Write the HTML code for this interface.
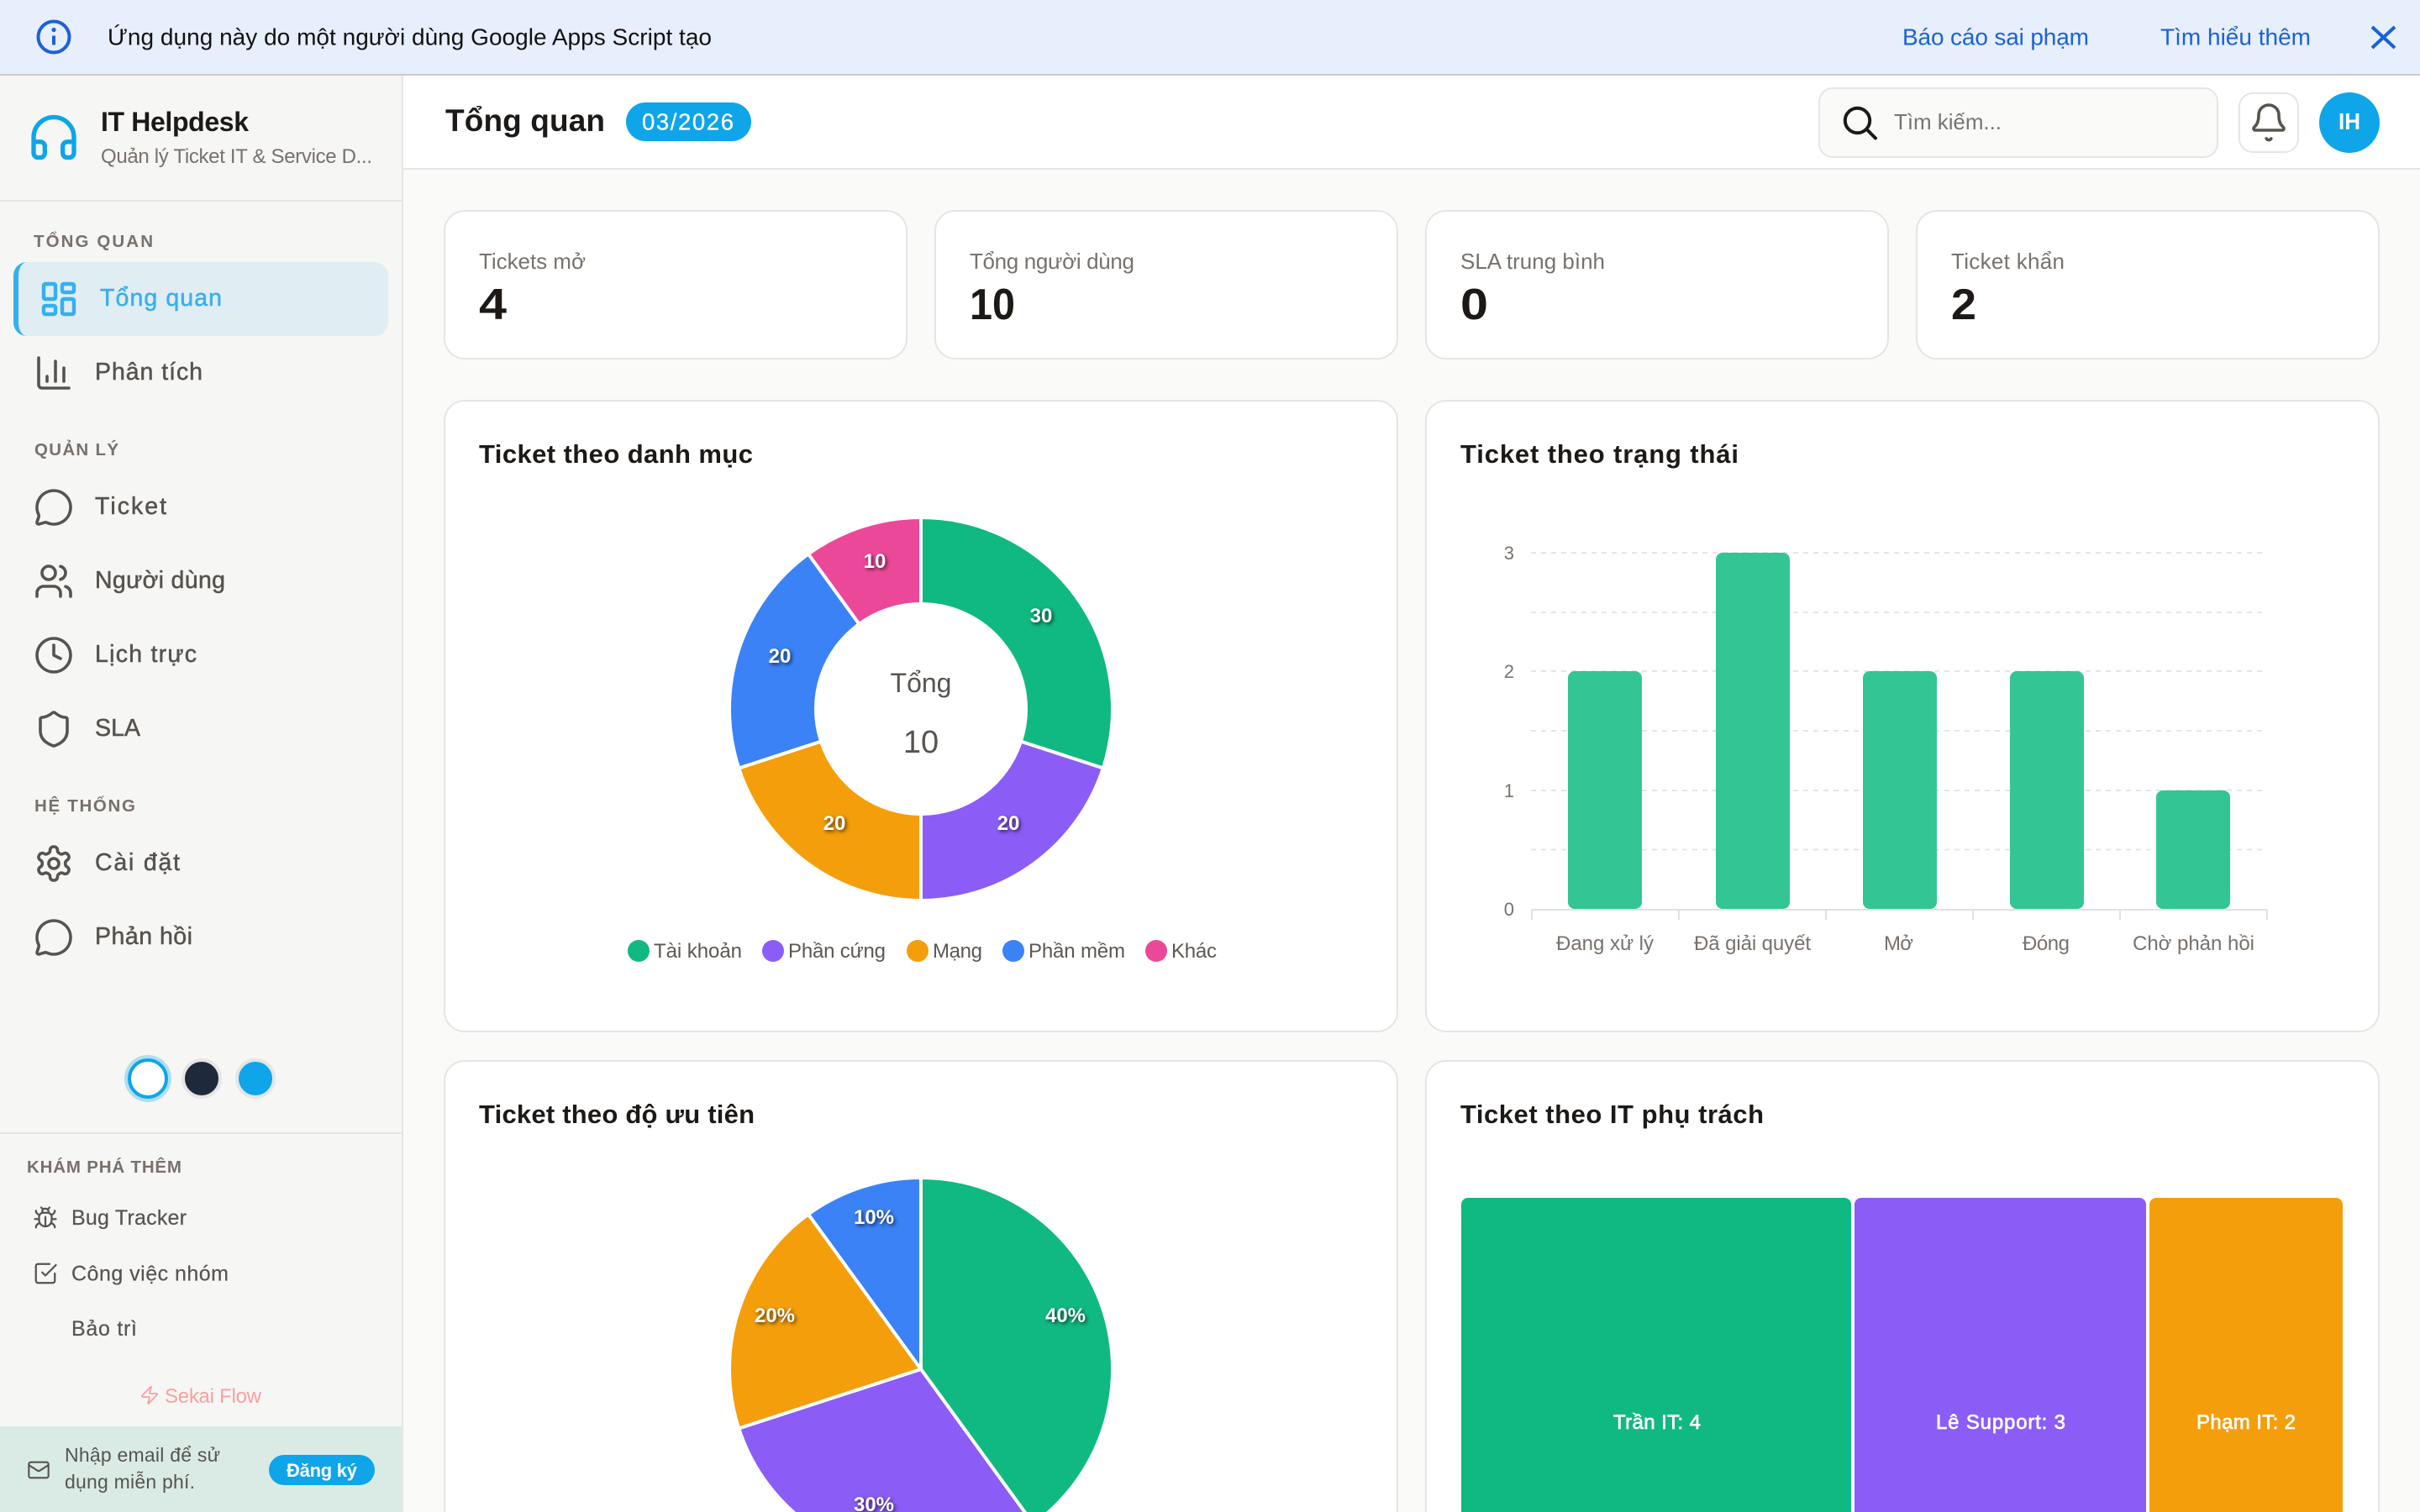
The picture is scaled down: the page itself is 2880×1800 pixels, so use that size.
<!DOCTYPE html>
<html lang="vi">
<head>
<meta charset="utf-8">
<title>IT Helpdesk - Tổng quan</title>
<style>
html,body{margin:0;padding:0;width:2880px;height:1800px;overflow:hidden;background:#fafaf8}
svg.page{display:block;position:absolute;left:0;top:0;overflow:hidden}
text{font-family:"Liberation Sans",Arial,sans-serif}
.b{font-weight:700}
.nav{font-size:28.5px;fill:#57534e;stroke:#57534e;stroke-width:.5}
.sec{font-size:20.5px;fill:#78716c;font-weight:700}
.sl{font-size:26px;fill:#78716c}
.sv{font-size:52px;font-weight:700;fill:#1c1917}
.ct{font-size:31px;font-weight:700;fill:#1c1917}
.ex{font-size:25px;fill:#57534e;stroke:#57534e;stroke-width:.2}
.yl{font-size:22px;fill:#78716c;text-anchor:end}
.xl{font-size:24px;fill:#78716c}
.lg{font-size:24px;fill:#5c5752}
.pl{font-size:24px;font-weight:700;fill:#fff;text-anchor:middle;filter:drop-shadow(2px 2px 2px rgba(0,0,0,.65))}
.tm{font-size:24px;fill:#fff;stroke:#fff;stroke-width:.7}
.i{fill:none;stroke:#57534e;stroke-width:1.8;stroke-linecap:round;stroke-linejoin:round}
.grid{stroke:#e7e5e4;stroke-width:2;stroke-dasharray:6 6}
.card{fill:#fff;stroke:#e7e5e4;stroke-width:2}
</style>
</head>
<body>
<svg class="page" xmlns="http://www.w3.org/2000/svg" width="2880" height="1800" viewBox="0 0 2880 1800">
<!-- backgrounds -->
<rect width="2880" height="1800" fill="#fafaf8"/>
<rect x="0" y="90" width="478" height="1710" fill="#f6f6f4"/>
<rect x="478" y="90" width="2" height="1710" fill="#e7e5e4"/>
<rect x="480" y="90" width="2400" height="110" fill="#fff"/>
<rect x="480" y="200" width="2400" height="2" fill="#e7e5e4"/>
<rect x="0" y="238" width="478" height="2" fill="#e7e5e4"/>

<!-- banner -->
<rect width="2880" height="88" fill="#e8effc"/>
<rect y="88" width="2880" height="2" fill="#c9c9cd"/>
<circle cx="64" cy="44" r="18.5" fill="none" stroke="#1a62d6" stroke-width="4"/>
<path d="M64 42.5v11" stroke="#1a62d6" stroke-width="4" fill="none"/>
<circle cx="64" cy="35.5" r="2.6" fill="#1a62d6"/>
<text x="128" y="53.5" font-size="28" fill="#111" textLength="719">Ứng dụng này do một người dùng Google Apps Script tạo</text>
<text x="2264" y="53.5" font-size="28" fill="#1a62d6" textLength="222">Báo cáo sai phạm</text>
<text x="2571" y="53.5" font-size="28" fill="#1a62d6" textLength="179">Tìm hiểu thêm</text>
<path d="M2823 32L2850 57M2850 32L2823 57" stroke="#1a62d6" stroke-width="4" fill="none"/>

<!-- brand -->
<svg x="32" y="131.5" width="64" height="64" viewBox="0 0 24 24"><path class="i" style="stroke:#0ea5e9;stroke-width:2" d="M3 14h3a2 2 0 0 1 2 2v3a2 2 0 0 1-2 2H5a2 2 0 0 1-2-2v-7a9 9 0 0 1 18 0v7a2 2 0 0 1-2 2h-1a2 2 0 0 1-2-2v-3a2 2 0 0 1 2-2h3"/></svg>
<text x="120" y="156" font-size="32" class="b" fill="#1c1917" textLength="176">IT Helpdesk</text>
<text x="120" y="194" font-size="24" fill="#78716c" textLength="323">Quản lý Ticket IT &amp; Service D...</text>

<!-- topbar -->
<text x="530" y="156" font-size="37" class="b" fill="#1c1917" textLength="190">Tổng quan</text>
<rect x="745" y="122" width="149" height="46" rx="23" fill="#0ea5e9"/>
<text x="764" y="154.5" font-size="27.5" fill="#fff" stroke="#fff" stroke-width=".3" textLength="109">03/2026</text>
<rect x="2165" y="105" width="474" height="82" rx="16" fill="#fafaf8" stroke="#e7e5e4" stroke-width="2"/>
<circle cx="2210.5" cy="143.5" r="14.7" fill="none" stroke="#1c1917" stroke-width="4"/>
<path d="M2221.5 154L2232 164.5" stroke="#1c1917" stroke-width="4" stroke-linecap="round" fill="none"/>
<text x="2254" y="154" font-size="26" fill="#757575" textLength="128">Tìm kiếm...</text>
<rect x="2665" y="111" width="70" height="70" rx="16" fill="#fff" stroke="#e7e5e4" stroke-width="2"/>
<svg x="2676" y="121" width="48" height="48" viewBox="0 0 24 24"><g class="i"><path d="M10.6 22a1.6 1.6 0 0 0 2.8 0"/><path d="M3.262 15.326A1 1 0 0 0 4 17h16a1 1 0 0 0 .74-1.673C19.41 13.956 18 12.499 18 8A6 6 0 0 0 6 8c0 4.499-1.411 5.956-2.738 7.326"/></g></svg>
<circle cx="2796" cy="146" r="36" fill="#0ea5e9"/>
<text x="2783" y="154" font-size="28" class="b" fill="#fff" textLength="26" lengthAdjust="spacingAndGlyphs">IH</text>

<!-- sidebar nav -->
<text x="40" y="294" class="sec" textLength="142">TỔNG QUAN</text>
<rect x="16" y="312" width="446" height="88" rx="16" fill="#e0edf3"/>
<path d="M32 312a16 16 0 0 0-16 16v56a16 16 0 0 0 16 16a10 16 0 0 1-10-16v-56a10 16 0 0 1 10-16z" fill="#35b0ee"/>
<svg x="46" y="332" width="48" height="48" viewBox="0 0 24 24"><g class="i" style="stroke:#35b0ee;stroke-width:2.2"><rect x="3" y="3" width="7" height="9" rx="1"/><rect x="14" y="3" width="7" height="5" rx="1"/><rect x="14" y="12" width="7" height="9" rx="1"/><rect x="3" y="16" width="7" height="5" rx="1"/></g></svg>
<text x="119" y="364" class="nav" style="fill:#35b0ee;stroke:#35b0ee" textLength="145">Tổng quan</text>

<svg x="40" y="420" width="48" height="48" viewBox="0 0 24 24"><g class="i"><path d="M3 3v16a2 2 0 0 0 2 2h16"/><path d="M18 17V9"/><path d="M13 17V5"/><path d="M8 17v-3"/></g></svg>
<text x="113" y="452" class="nav" textLength="128">Phân tích</text>

<text x="41" y="542" class="sec" textLength="100">QUẢN LÝ</text>
<svg x="40" y="580" width="48" height="48" viewBox="0 0 24 24"><path class="i" d="M2.992 16.342a2 2 0 0 1 .094 1.167l-1.065 3.29a1 1 0 0 0 1.236 1.168l3.413-.998a2 2 0 0 1 1.099.092 10 10 0 1 0-4.777-4.719"/></svg>
<text x="113" y="612" class="nav" textLength="85">Ticket</text>
<svg x="40" y="668" width="48" height="48" viewBox="0 0 24 24"><g class="i"><path d="M16 21v-2a4 4 0 0 0-4-4H6a4 4 0 0 0-4 4v2"/><circle cx="9" cy="7" r="4"/><path d="M22 21v-2a4 4 0 0 0-3-3.87"/><path d="M16 3.13a4 4 0 0 1 0 7.75"/></g></svg>
<text x="113" y="700" class="nav" textLength="155">Người dùng</text>
<svg x="40" y="756" width="48" height="48" viewBox="0 0 24 24"><g class="i"><circle cx="12" cy="12" r="10"/><path d="M12 6v6l4 2"/></g></svg>
<text x="113" y="788" class="nav" textLength="121">Lịch trực</text>
<svg x="40" y="844" width="48" height="48" viewBox="0 0 24 24"><path class="i" d="M20 13c0 5-3.5 7.5-7.66 8.95a1 1 0 0 1-.67-.01C7.5 20.5 4 18 4 13V6a1 1 0 0 1 1-1c2 0 4.5-1.2 6.24-2.72a1.17 1.17 0 0 1 1.52 0C14.51 3.81 17 5 19 5a1 1 0 0 1 1 1z"/></svg>
<text x="113" y="876" class="nav" textLength="54">SLA</text>

<text x="41" y="966" class="sec" textLength="120">HỆ THỐNG</text>
<svg x="40" y="1004" width="48" height="48" viewBox="0 0 24 24"><g class="i"><path d="M12.22 2h-.44a2 2 0 0 0-2 2v.18a2 2 0 0 1-1 1.73l-.43.25a2 2 0 0 1-2 0l-.15-.08a2 2 0 0 0-2.73.73l-.22.38a2 2 0 0 0 .73 2.73l.15.1a2 2 0 0 1 1 1.72v.51a2 2 0 0 1-1 1.74l-.15.09a2 2 0 0 0-.73 2.73l.22.38a2 2 0 0 0 2.73.73l.15-.08a2 2 0 0 1 2 0l.43.25a2 2 0 0 1 1 1.73V20a2 2 0 0 0 2 2h.44a2 2 0 0 0 2-2v-.18a2 2 0 0 1 1-1.73l.43-.25a2 2 0 0 1 2 0l.15.08a2 2 0 0 0 2.73-.73l.22-.39a2 2 0 0 0-.73-2.73l-.15-.08a2 2 0 0 1-1-1.74v-.5a2 2 0 0 1 1-1.74l.15-.09a2 2 0 0 0 .73-2.73l-.22-.38a2 2 0 0 0-2.73-.73l-.15.08a2 2 0 0 1-2 0l-.43-.25a2 2 0 0 1-1-1.73V4a2 2 0 0 0-2-2z"/><circle cx="12" cy="12" r="3"/></g></svg>
<text x="113" y="1036" class="nav" textLength="101">Cài đặt</text>
<svg x="40" y="1092" width="48" height="48" viewBox="0 0 24 24"><path class="i" d="M2.992 16.342a2 2 0 0 1 .094 1.167l-1.065 3.29a1 1 0 0 0 1.236 1.168l3.413-.998a2 2 0 0 1 1.099.092 10 10 0 1 0-4.777-4.719"/></svg>
<text x="113" y="1124" class="nav" textLength="116">Phản hồi</text>

<!-- theme dots -->
<circle cx="176" cy="1284" r="26" fill="none" stroke="#0ea5e9" stroke-opacity=".3" stroke-width="4"/>
<circle cx="176" cy="1284" r="22" fill="#fff" stroke="#0ea5e9" stroke-width="4"/>
<circle cx="240" cy="1284" r="22" fill="#1e293b" stroke="#e7e5e4" stroke-width="4"/>
<circle cx="304" cy="1284" r="22" fill="#0ea5e9" stroke="#e7e5e4" stroke-width="4"/>
<rect x="0" y="1348" width="478" height="2" fill="#e7e5e4"/>

<!-- explore -->
<text x="32" y="1396" class="sec" textLength="184">KHÁM PHÁ THÊM</text>
<svg x="39" y="1435" width="30" height="30" viewBox="0 0 24 24"><g class="i"><path d="m8 2 1.88 1.88"/><path d="M14.12 3.88 16 2"/><path d="M9 7.13v-1a3.003 3.003 0 1 1 6 0v1"/><path d="M12 20c-3.3 0-6-2.7-6-6v-3a4 4 0 0 1 4-4h4a4 4 0 0 1 4 4v3c0 3.3-2.7 6-6 6"/><path d="M12 20v-9"/><path d="M6.53 9C4.6 8.8 3 7.1 3 5"/><path d="M6 13H2"/><path d="M3 21c0-2.1 1.7-3.9 3.8-4"/><path d="M20.97 5c0 2.1-1.6 3.8-3.5 4"/><path d="M22 13h-4"/><path d="M17.2 17c2.1.1 3.8 1.9 3.8 4"/></g></svg>
<text x="85" y="1458" class="ex" textLength="137">Bug Tracker</text>
<svg x="39" y="1501" width="30" height="30" viewBox="0 0 24 24"><g class="i"><path d="m9 11 3 3L22 4"/><path d="M21 12v7a2 2 0 0 1-2 2H5a2 2 0 0 1-2-2V5a2 2 0 0 1 2-2h11"/></g></svg>
<text x="85" y="1524.5" class="ex" textLength="187">Công việc nhóm</text>
<text x="85" y="1590" class="ex" textLength="78">Bảo trì</text>
<svg x="166" y="1649" width="24" height="24" viewBox="0 0 24 24"><path class="i" style="stroke:#f8a0a0" d="M4 14a1 1 0 0 1-.78-1.63l9.9-10.2a.5.5 0 0 1 .86.46l-1.92 6.02A1 1 0 0 0 13 10h7a1 1 0 0 1 .78 1.63l-9.9 10.2a.5.5 0 0 1-.86-.46l1.92-6.02A1 1 0 0 0 11 14z"/></svg>
<text x="196" y="1670" font-size="24" fill="#f8a0a0" textLength="115">Sekai Flow</text>

<!-- signup footer -->
<rect x="0" y="1698" width="478" height="102" fill="#daebe5"/>
<svg x="32" y="1736" width="28" height="28" viewBox="0 0 24 24"><g class="i"><rect x="2" y="4" width="20" height="16" rx="2"/><path d="m22 7-8.97 5.7a1.94 1.94 0 0 1-2.06 0L2 7"/></g></svg>
<text x="77" y="1740" font-size="23" fill="#57534e" textLength="185">Nhập email để sử</text>
<text x="77" y="1772" font-size="23" fill="#57534e" textLength="155">dụng miễn phí.</text>
<rect x="320" y="1732" width="126" height="36" rx="18" fill="#0ea5e9"/>
<text x="341" y="1758" font-size="22" class="b" fill="#fff" textLength="84">Đăng ký</text>

<!-- stat cards -->
<rect class="card" x="529" y="251" width="550" height="176" rx="24"/>
<rect class="card" x="1113" y="251" width="550" height="176" rx="24"/>
<rect class="card" x="1697" y="251" width="550" height="176" rx="24"/>
<rect class="card" x="2281" y="251" width="550" height="176" rx="24"/>
<text x="570" y="320" class="sl" textLength="127">Tickets mở</text>
<text x="570" y="380" class="sv" textLength="33" lengthAdjust="spacingAndGlyphs">4</text>
<text x="1154" y="320" class="sl" textLength="196">Tổng người dùng</text>
<text x="1154" y="380" class="sv" textLength="54" lengthAdjust="spacingAndGlyphs">10</text>
<text x="1738" y="320" class="sl" textLength="172">SLA trung bình</text>
<text x="1738" y="380" class="sv" textLength="33" lengthAdjust="spacingAndGlyphs">0</text>
<text x="2322" y="320" class="sl" textLength="135">Ticket khẩn</text>
<text x="2322" y="380" class="sv" textLength="30" lengthAdjust="spacingAndGlyphs">2</text>

<!-- chart cards -->
<rect class="card" x="529" y="477" width="1134" height="751" rx="24"/>
<rect class="card" x="1697" y="477" width="1134" height="751" rx="24"/>
<rect class="card" x="529" y="1263" width="1134" height="700" rx="24"/>
<rect class="card" x="1697" y="1263" width="1134" height="700" rx="24"/>
<text x="570" y="551" class="ct" textLength="326">Ticket theo danh mục</text>
<text x="1738" y="551" class="ct" textLength="331">Ticket theo trạng thái</text>
<text x="570" y="1337" class="ct" textLength="328">Ticket theo độ ưu tiên</text>
<text x="1738" y="1337" class="ct" textLength="361">Ticket theo IT phụ trách</text>

<!-- donut -->
<g stroke="#fff" stroke-width="4" stroke-linejoin="miter">
<path fill="#10b981" d="M1096 616A228 228 0 0 1 1312.8 914.5L1214.9 882.6A125 125 0 0 0 1096 719Z"/>
<path fill="#8b5cf6" d="M1312.8 914.5A228 228 0 0 1 1096 1072L1096 969A125 125 0 0 0 1214.9 882.6Z"/>
<path fill="#f59e0b" d="M1096 1072A228 228 0 0 1 879.2 914.5L977.1 882.6A125 125 0 0 0 1096 969Z"/>
<path fill="#3b82f6" d="M879.2 914.5A228 228 0 0 1 962 659.5L1022.5 742.9A125 125 0 0 0 977.1 882.6Z"/>
<path fill="#ec4899" d="M962 659.5A228 228 0 0 1 1096 616L1096 719A125 125 0 0 0 1022.5 742.9Z"/>
</g>
<text x="1239" y="741" class="pl">30</text>
<text x="1200" y="988" class="pl">20</text>
<text x="993" y="988" class="pl">20</text>
<text x="928" y="789" class="pl">20</text>
<text x="1041" y="676" class="pl">10</text>
<text x="1096" y="824" font-size="32" fill="#57534e" text-anchor="middle">Tổng</text>
<text x="1096" y="896" font-size="38" fill="#57534e" text-anchor="middle">10</text>

<circle cx="760" cy="1132" r="13" fill="#10b981"/><text x="778" y="1140" class="lg" textLength="105">Tài khoản</text>
<circle cx="920" cy="1132" r="13" fill="#8b5cf6"/><text x="938" y="1140" class="lg" textLength="116">Phần cứng</text>
<circle cx="1092" cy="1132" r="13" fill="#f59e0b"/><text x="1110" y="1140" class="lg" textLength="59">Mạng</text>
<circle cx="1206" cy="1132" r="13" fill="#3b82f6"/><text x="1224" y="1140" class="lg" textLength="115">Phần mềm</text>
<circle cx="1376" cy="1132" r="13" fill="#ec4899"/><text x="1394" y="1140" class="lg" textLength="54">Khác</text>

<!-- bar chart -->
<g>
<line class="grid" x1="1822" x2="2698" y1="658" y2="658"/>
<line class="grid" x1="1822" x2="2698" y1="729" y2="729"/>
<line class="grid" x1="1822" x2="2698" y1="799" y2="799"/>
<line class="grid" x1="1822" x2="2698" y1="870" y2="870"/>
<line class="grid" x1="1822" x2="2698" y1="941" y2="941"/>
<line class="grid" x1="1822" x2="2698" y1="1011.5" y2="1011.5"/>
</g>
<path d="M1823 1083H2698M1823 1083v12M1998 1083v12M2173 1083v12M2348 1083v12M2523 1083v12M2698 1083v12" stroke="#e3e1df" stroke-width="2" fill="none"/>
<g fill="#34c595">
<rect x="1866" y="799" width="88" height="283" rx="8"/>
<rect x="2042" y="658" width="88" height="424" rx="8"/>
<rect x="2217" y="799" width="88" height="283" rx="8"/>
<rect x="2392" y="799" width="88" height="283" rx="8"/>
<rect x="2566" y="941" width="88" height="141" rx="8"/>
</g>
<text x="1802" y="666" class="yl">3</text>
<text x="1802" y="807" class="yl">2</text>
<text x="1802" y="949" class="yl">1</text>
<text x="1802" y="1090" class="yl">0</text>
<text x="1852" y="1131" class="xl" textLength="116">Đang xử lý</text>
<text x="2016" y="1131" class="xl" textLength="139">Đã giải quyết</text>
<text x="2242" y="1131" class="xl" textLength="35">Mở</text>
<text x="2407" y="1131" class="xl" textLength="56">Đóng</text>
<text x="2538" y="1131" class="xl" textLength="145">Chờ phản hồi</text>

<!-- pie -->
<g stroke="#fff" stroke-width="4" stroke-linejoin="miter">
<path fill="#10b981" d="M1096 1630V1402A228 228 0 0 1 1230 1814.5Z"/>
<path fill="#8b5cf6" d="M1096 1630L1230 1814.5A228 228 0 0 1 879.2 1700.5Z"/>
<path fill="#f59e0b" d="M1096 1630L879.2 1700.5A228 228 0 0 1 962 1445.5Z"/>
<path fill="#3b82f6" d="M1096 1630L962 1445.5A228 228 0 0 1 1096 1402Z"/>
</g>
<text x="1268" y="1574" class="pl">40%</text>
<text x="922" y="1574" class="pl">20%</text>
<text x="1040" y="1457" class="pl">10%</text>
<text x="1040" y="1799" class="pl">30%</text>

<!-- treemap -->
<rect x="1739" y="1426" width="464" height="500" rx="8" fill="#10b981"/>
<rect x="2207" y="1426" width="347" height="500" rx="8" fill="#8b5cf6"/>
<rect x="2558" y="1426" width="230" height="500" rx="8" fill="#f59e0b"/>
<text x="1920" y="1701" class="tm" textLength="104">Trần IT: 4</text>
<text x="2304" y="1701" class="tm" textLength="154">Lê Support: 3</text>
<text x="2614" y="1701" class="tm" textLength="118">Phạm IT: 2</text>
</svg>
</body>
</html>
